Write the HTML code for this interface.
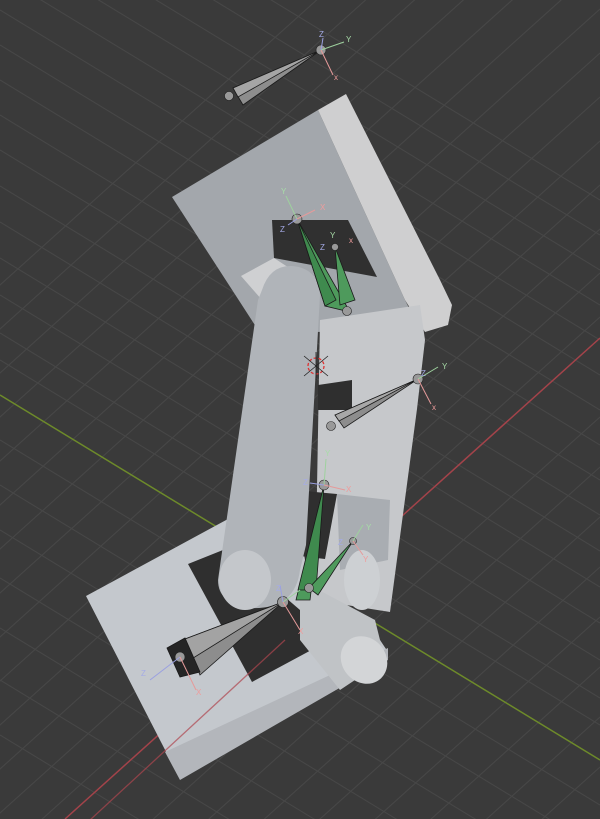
<!DOCTYPE html>
<html><head><style>
html,body{margin:0;padding:0;background:#3a3a3a;width:600px;height:819px;overflow:hidden;}
svg{display:block}
text{font-family:"Liberation Sans",sans-serif;font-size:8px}
</style></head><body>
<svg width="600" height="819" viewBox="0 0 600 819" xmlns="http://www.w3.org/2000/svg">
<rect width="600" height="819" fill="#3a3a3a"/>
<g stroke="#474747" stroke-width="1.1">
<line x1="-300" y1="819" x2="600" y2="9"/>
<line x1="-300" y1="775" x2="600" y2="-35"/>
<line x1="-300" y1="731" x2="600" y2="-79"/>
<line x1="-300" y1="687" x2="600" y2="-123"/>
<line x1="-300" y1="643" x2="600" y2="-167"/>
<line x1="-300" y1="599" x2="600" y2="-211"/>
<line x1="-300" y1="555" x2="600" y2="-255"/>
<line x1="-300" y1="863" x2="600" y2="53"/>
<line x1="-300" y1="907" x2="600" y2="97"/>
<line x1="-300" y1="951" x2="600" y2="141"/>
<line x1="-300" y1="995" x2="600" y2="185"/>
<line x1="-300" y1="1039" x2="600" y2="229"/>
<line x1="-300" y1="1083" x2="600" y2="273"/>
<line x1="-300" y1="1127" x2="600" y2="317"/>
<line x1="-300" y1="1227" x2="600" y2="417"/>
<line x1="-300" y1="1277" x2="600" y2="467"/>
<line x1="-300" y1="1327" x2="600" y2="517"/>
<line x1="-300" y1="1377" x2="600" y2="567"/>
<line x1="-300" y1="1427" x2="600" y2="617"/>
<line x1="-300" y1="1477" x2="600" y2="667"/>
<line x1="-300" y1="1527" x2="600" y2="717"/>
<line x1="-300" y1="1577" x2="600" y2="767"/>
<line x1="0" y1="-25" x2="600" y2="340"/>
<line x1="0" y1="10" x2="600" y2="375"/>
<line x1="0" y1="45" x2="600" y2="410"/>
<line x1="0" y1="80" x2="600" y2="445"/>
<line x1="0" y1="115" x2="600" y2="480"/>
<line x1="0" y1="150" x2="600" y2="515"/>
<line x1="0" y1="186" x2="600" y2="551"/>
<line x1="0" y1="222" x2="600" y2="587"/>
<line x1="0" y1="258" x2="600" y2="623"/>
<line x1="0" y1="295" x2="600" y2="660"/>
<line x1="0" y1="333" x2="600" y2="698"/>
<line x1="0" y1="360" x2="600" y2="725"/>
<line x1="0" y1="440" x2="600" y2="805"/>
<line x1="0" y1="485" x2="600" y2="850"/>
<line x1="0" y1="530" x2="600" y2="895"/>
<line x1="0" y1="578" x2="600" y2="943"/>
<line x1="0" y1="628" x2="600" y2="993"/>
<line x1="0" y1="680" x2="600" y2="1045"/>
<line x1="0" y1="735" x2="600" y2="1100"/>
<line x1="0" y1="-60" x2="600" y2="305"/>
<line x1="0" y1="-95" x2="600" y2="270"/>
<line x1="0" y1="-130" x2="600" y2="235"/>
<line x1="0" y1="-165" x2="600" y2="200"/>
</g>
<line x1="0" y1="395" x2="600" y2="760" stroke="#6d8a2a" stroke-width="1.5"/>
<line x1="65" y1="819" x2="600" y2="338" stroke="#a3434a" stroke-width="1.5"/>

<!-- Bottom plate -->
<polygon points="86,596 228,519 300,530 305,560 380,640 388,652 180,779" fill="#c4c8cd"/>
<polygon points="165,752 388,648 388,660 180,780" fill="#b3b6bb"/>
<polygon points="188,564 228,548 300,610 330,640 252,682" fill="#2f2f2f"/>

<!-- Upper plate -->
<polygon points="172,197 318,110 405,300 420,330 260,333" fill="#a3a7ac"/>
<polygon points="318,110 346,94 440,280 452,305 448,325 425,332 405,300" fill="#cfcfd0"/>
<polygon points="272,220 348,220 377,277 274,258" fill="#303030"/>
<polygon points="241,276 274,258 300,275 262,300" fill="#cfd0d2"/>

<!-- Middle link right bar -->
<polygon points="320,320 420,305 425,340 417,409 390,612 315,600" fill="#c6c8cb"/>
<polygon points="318,385 352,380 352,410 318,410" fill="#2f2f2f"/>
<polygon points="337,494 390,500 388,560 340,570" fill="#a9adb2"/>
<polygon points="304,491 337,494 325,559 300,556" fill="#2f2f2f"/>
<!-- lower cylinder -->
<polygon points="300,580 375,620 385,660 340,690 300,640" fill="#c0c3c6"/>
<ellipse cx="364" cy="660" rx="22" ry="25" transform="rotate(-40 364 660)" fill="#d3d5d7"/>
<!-- Middle link front bar -->
<path d="M262,290 Q270,265 292,266 Q318,268 320,295 L306,545 L300,570 Q295,610 250,608 Q218,604 218,580 L258,300 Z" fill="#b0b4b9"/>
<ellipse cx="245" cy="580" rx="26" ry="30" fill="#c4c7cb"/>
<ellipse cx="362" cy="580" rx="18" ry="30" fill="#cdd0d3"/>

<!-- 3D cursor -->
<circle cx="316" cy="366" r="8" fill="none" stroke="#d33" stroke-width="1.3" stroke-dasharray="3 2"/>
<path d="M304,356 L328,376 M328,356 L304,376 M316,352 V380" stroke="#222" stroke-width="0.8"/>

<line x1="90" y1="820" x2="285" y2="640" stroke="#b0464f" stroke-width="1.3" opacity="0.7"/>

<!-- Bones -->
<g stroke="#1a1a1a" stroke-width="0.8">
<polygon points="321,50 233,88 243,105" fill="#8d8d8d"/>
<polygon points="321,50 233,88 238,97" fill="#a5a5a5"/>
<polygon points="418,379 335,415 344,428" fill="#8d8d8d"/>
<polygon points="418,379 335,415 339,421" fill="#a8a8a8"/>
<polygon points="283,602 185,639 200,675" fill="#8d8d8d"/>
<polygon points="283,602 185,639 190,660" fill="#a3a3a3"/>
<polygon points="167,648 185,638 200,672 180,677" fill="#252525"/>
<polygon points="297,219 325,306 350,312" fill="#4e9a5c"/>
<polygon points="297,219 325,306 336,300" fill="#3f8a4e"/>
<polygon points="335,247 340,305 355,300" fill="#4e9a5c"/>
<polygon points="324,485 296,600 310,600" fill="#4e9a5c"/>
<polygon points="324,485 298,590 316,590" fill="#3f8a4e"/>
<polygon points="353,541 309,588 318,595" fill="#4e9a5c"/>
</g>
<g fill="#999" stroke="#222" stroke-width="0.6">
<circle cx="321" cy="50" r="5"/><circle cx="229" cy="96" r="4.5"/>
<circle cx="418" cy="379" r="5"/><circle cx="331" cy="426" r="4.5"/>
<circle cx="283" cy="602" r="5.5"/><circle cx="180" cy="657" r="5"/>
<circle cx="297" cy="219" r="5"/><circle cx="347" cy="311" r="4.5"/>
<circle cx="335" cy="247" r="3.5"/>
<circle cx="324" cy="485" r="5"/><circle cx="309" cy="588" r="4.5"/><circle cx="353" cy="541" r="3.5"/>
</g>
<g stroke-width="1">
<path d="M321,50 L344,42" stroke="#9ed19e"/><path d="M321,50 L333,75" stroke="#e59a9a"/><path d="M321,50 L323,38" stroke="#9aa0e0"/>
<path d="M297,219 L286,196" stroke="#9ed19e"/><path d="M297,219 L315,210" stroke="#e59a9a"/><path d="M297,219 L288,225" stroke="#9aa0e0"/>
<path d="M418,379 L438,367" stroke="#9ed19e"/><path d="M418,379 L431,404" stroke="#e59a9a"/>
<path d="M324,485 L326,459" stroke="#9ed19e"/><path d="M324,485 L345,490" stroke="#e59a9a"/><path d="M324,485 L310,483" stroke="#9aa0e0"/>
<path d="M353,541 L363,525" stroke="#9ed19e"/><path d="M353,541 L363,555" stroke="#e59a9a"/>
<path d="M283,602 L300,590" stroke="#9ed19e"/><path d="M283,602 L300,630" stroke="#e59a9a"/><path d="M283,602 L280,585" stroke="#9aa0e0"/>
<path d="M180,657 L150,680" stroke="#9aa0e0"/><path d="M180,657 L196,690" stroke="#e59a9a"/>
</g>
<g font-size="8">
<text x="319" y="37" fill="#a5abe6">Z</text><text x="346" y="42" fill="#a8dca8">Y</text><text x="334" y="80" fill="#ef9c9c">x</text>
<text x="281" y="194" fill="#a8dca8">Y</text><text x="320" y="210" fill="#ef9c9c">X</text><text x="280" y="232" fill="#a5abe6">Z</text>
<text x="330" y="238" fill="#a8dca8">Y</text><text x="320" y="250" fill="#a5abe6">Z</text><text x="349" y="243" fill="#ef9c9c">x</text>
<text x="421" y="376" fill="#a5abe6">Z</text><text x="442" y="369" fill="#a8dca8">Y</text><text x="432" y="410" fill="#ef9c9c">x</text>
<text x="325" y="456" fill="#a8dca8">Y</text><text x="346" y="492" fill="#ef9c9c">X</text><text x="303" y="485" fill="#a5abe6">Z</text>
<text x="366" y="530" fill="#a8dca8">Y</text><text x="338" y="545" fill="#a5abe6">Z</text><text x="363" y="562" fill="#ef9c9c">Y</text>
<text x="276" y="591" fill="#a5abe6">Z</text><text x="298" y="634" fill="#ef9c9c">X</text>
<text x="141" y="676" fill="#a5abe6">Z</text><text x="196" y="695" fill="#ef9c9c">X</text>
</g>
</svg>
</body></html>
